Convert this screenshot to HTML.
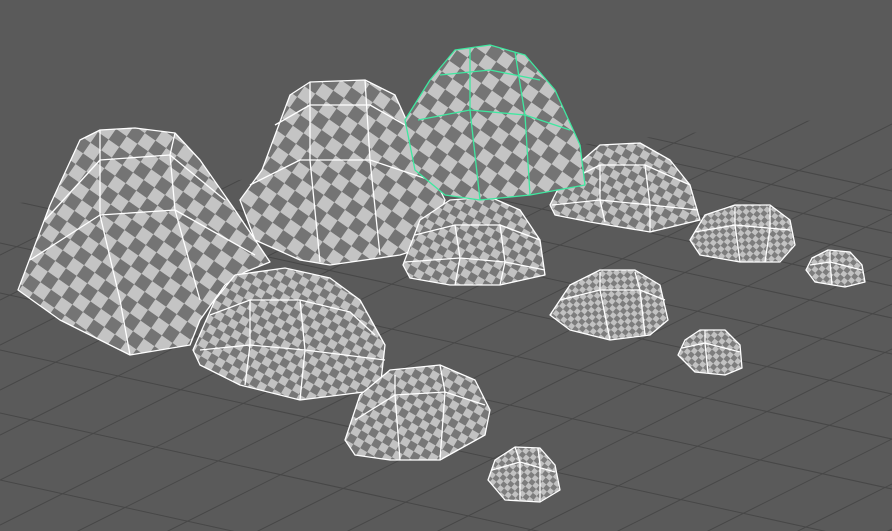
<!DOCTYPE html>
<html><head><meta charset="utf-8"><style>html,body{margin:0;padding:0;background:#5a5a5a;overflow:hidden;width:892px;height:531px}svg{display:block}</style></head>
<body>
<svg width="892" height="531" viewBox="0 0 892 531" xmlns="http://www.w3.org/2000/svg">
<defs>
<pattern id="pL" width="26" height="26" patternUnits="userSpaceOnUse" patternTransform="rotate(35)">
<rect width="26" height="26" fill="#c4c4c4"/><rect width="13" height="13" fill="#747474"/><rect x="13" y="13" width="13" height="13" fill="#747474"/></pattern>
<pattern id="pM" width="16" height="16" patternUnits="userSpaceOnUse" patternTransform="rotate(30)">
<rect width="16" height="16" fill="#c2c2c2"/><rect width="8" height="8" fill="#777"/><rect x="8" y="8" width="8" height="8" fill="#777"/></pattern>
<pattern id="pS" width="10" height="10" patternUnits="userSpaceOnUse" patternTransform="rotate(40)">
<rect width="10" height="10" fill="#c2c2c2"/><rect width="5" height="5" fill="#7d7d7d"/><rect x="5" y="5" width="5" height="5" fill="#7d7d7d"/></pattern>
<clipPath id="floor"><polygon points="0,205 892,112 892,531 0,531"/></clipPath>
</defs>
<rect width="892" height="531" fill="#5a5a5a"/>
<g clip-path="url(#floor)" stroke="#474747" stroke-width="1">
<line x1="0" y1="-5" x2="892" y2="191"/><line x1="0" y1="15" x2="892" y2="211"/><line x1="0" y1="37" x2="892" y2="233"/>
<line x1="0" y1="62" x2="892" y2="258"/><line x1="0" y1="90" x2="892" y2="286"/><line x1="0" y1="122" x2="892" y2="318"/>
<line x1="0" y1="158" x2="892" y2="354"/><line x1="0" y1="198" x2="892" y2="394"/><line x1="0" y1="243" x2="892" y2="439"/>
<line x1="0" y1="293" x2="892" y2="489"/><line x1="0" y1="350" x2="892" y2="546"/><line x1="0" y1="413" x2="892" y2="609"/>
<line x1="0" y1="480" x2="892" y2="676"/>
<line x1="0" y1="300" x2="892" y2="-146"/><line x1="0" y1="345" x2="892" y2="-101"/><line x1="0" y1="390" x2="892" y2="-56"/>
<line x1="0" y1="435" x2="892" y2="-11"/><line x1="0" y1="480" x2="892" y2="34"/><line x1="0" y1="525" x2="892" y2="79"/>
<line x1="0" y1="570" x2="892" y2="124"/><line x1="0" y1="615" x2="892" y2="169"/><line x1="0" y1="660" x2="892" y2="214"/>
<line x1="0" y1="705" x2="892" y2="259"/><line x1="0" y1="750" x2="892" y2="304"/><line x1="0" y1="795" x2="892" y2="349"/>
<line x1="0" y1="840" x2="892" y2="394"/><line x1="0" y1="885" x2="892" y2="439"/><line x1="0" y1="930" x2="892" y2="484"/>
<line x1="0" y1="975" x2="892" y2="529"/><line x1="0" y1="1020" x2="892" y2="574"/><line x1="0" y1="255" x2="892" y2="-191"/>
</g>
<g stroke="#ffffff" stroke-width="1.3" stroke-linejoin="round">
<polygon fill="url(#pL)" points="18,290 50,205 80,140 100,130 135,128 175,133 200,160 235,210 270,262 245,272 225,285 200,320 190,345 130,355 60,320"/>
<polyline fill="none" points="45,220 100,160 170,155 225,200"/><polyline fill="none" points="30,260 100,215 175,210 255,255"/>
<polyline fill="none" points="100,130 100,160 100,215 120,300 130,355"/><polyline fill="none" points="175,133 170,155 175,210 200,300"/>
<polygon fill="url(#pL)" points="240,200 262,170 290,95 310,82 365,80 395,95 420,150 445,200 430,245 400,255 330,265 300,260 255,240"/>
<polyline fill="none" points="275,125 310,105 370,105 405,125"/><polyline fill="none" points="250,185 300,160 370,160 430,180"/>
<polyline fill="none" points="310,82 310,160 320,262"/><polyline fill="none" points="365,80 370,160 380,255"/>
<polygon fill="url(#pM)" points="193,350 215,300 235,275 285,268 330,278 360,300 385,345 380,390 300,400 240,385 200,365"/>
<polyline fill="none" points="210,315 250,300 300,300 350,312 375,335"/><polyline fill="none" points="200,350 250,345 305,350 385,360"/>
<polyline fill="none" points="250,300 250,345 245,385"/><polyline fill="none" points="300,300 305,350 300,400"/>
<polygon fill="url(#pM)" points="403,265 420,220 450,200 490,197 520,210 540,240 545,275 500,285 450,285 410,278"/>
<polyline fill="none" points="415,235 455,225 500,225 540,240"/><polyline fill="none" points="405,262 460,258 505,262 545,270"/>
<polyline fill="none" points="455,225 460,258 455,285"/><polyline fill="none" points="500,225 505,262 500,285"/>
<polygon fill="url(#pM)" points="550,205 565,175 600,145 640,143 670,160 690,185 700,220 650,232 590,222 555,215"/>
<polyline fill="none" points="560,185 600,165 645,165 690,185"/><polyline fill="none" points="552,205 600,200 650,205 698,210"/>
<polyline fill="none" points="600,165 600,200 605,222"/><polyline fill="none" points="645,165 650,205 650,232"/>
<polygon fill="url(#pM)" points="345,440 360,395 390,370 440,365 475,380 490,410 485,435 440,460 390,460 355,455"/>
<polyline fill="none" points="355,420 395,395 445,392 485,405"/><polyline fill="none" points="395,375 395,395 400,460"/><polyline fill="none" points="440,365 445,392 440,460"/>
<polygon fill="url(#pS)" points="550,315 570,285 600,270 635,270 660,285 668,320 650,335 610,340 570,330"/>
<polyline fill="none" points="560,300 600,290 640,290 665,300"/><polyline fill="none" points="600,272 600,290 610,340"/><polyline fill="none" points="635,272 640,290 645,335"/>
<polygon fill="url(#pS)" points="690,240 705,215 735,205 770,205 790,220 795,245 780,262 740,262 700,255"/>
<polyline fill="none" points="695,232 735,225 790,230"/><polyline fill="none" points="735,207 735,225 740,262"/><polyline fill="none" points="770,206 770,228 765,262"/>
<polygon fill="url(#pS)" points="488,480 495,460 515,447 540,448 555,465 560,490 540,502 505,500"/>
<polyline fill="none" points="492,470 520,462 555,472"/><polyline fill="none" points="515,447 520,462 520,500"/><polyline fill="none" points="538,448 540,465 540,502"/>
<polygon fill="url(#pS)" points="678,355 685,340 700,330 725,330 740,345 742,368 725,375 695,372"/>
<polyline fill="none" points="682,348 705,343 740,352"/><polyline fill="none" points="705,330 705,343 708,373"/>
<polygon fill="url(#pS)" points="806,270 812,258 828,250 850,252 862,265 865,282 845,287 815,282"/>
<polyline fill="none" points="810,265 830,262 862,270"/><polyline fill="none" points="830,251 830,262 832,285"/>
</g>
<g stroke="#3fe8a0" stroke-width="1.3" stroke-linejoin="round">
<polygon fill="url(#pL)" points="405,120 430,80 455,50 490,45 525,55 555,90 580,145 585,185 530,195 480,200 445,195 415,170"/>
<polyline fill="none" points="440,75 490,70 540,80"/><polyline fill="none" points="418,120 470,110 525,115 570,130"/>
<polyline fill="none" points="470,48 470,110 480,200"/><polyline fill="none" points="515,52 525,115 530,195"/>
</g>
</svg>
</body></html>
